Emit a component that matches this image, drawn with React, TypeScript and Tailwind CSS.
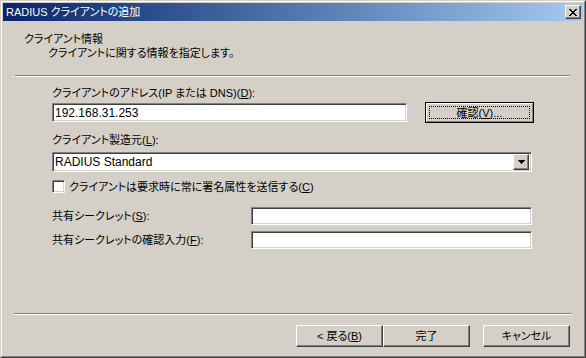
const sunken =
  "border border-t-[#808080] border-l-[#808080] border-b-white border-r-white shadow-[inset_1px_1px_0_#404040,inset_-1px_-1px_0_#d4d0c8] bg-white";
const raised =
  "border border-t-white border-l-white border-b-[#404040] border-r-[#404040] shadow-[inset_-1px_-1px_0_#808080,inset_1px_1px_0_#d4d0c8] bg-[#d4d0c8]";

function U({ children }: { children: string }) {
  return <span className="underline underline-offset-[1px]">{children}</span>;
}

function Button({ children, className = "" }: { children: React.ReactNode; className?: string }) {
  return (
    <div className={`${raised} w-[87px] h-[22px] flex items-center justify-center ${className}`}>
      {children}
    </div>
  );
}

export default function App() {
  return (
    <div className="w-[586px] h-[358px] bg-[#d4d0c8] border border-t-[#d4d0c8] border-l-[#d4d0c8] border-b-[#404040] border-r-[#404040] text-[11px] leading-[14px] text-black font-['Liberation_Sans','Noto_Sans_CJK_JP',sans-serif] [font-feature-settings:'palt']">
      <div className="h-full border border-t-white border-l-white border-b-[#808080] border-r-[#808080] p-px flex flex-col">
        {/* タイトルバー */}
        <div className="h-[18px] flex items-center bg-linear-to-r from-[#0a246a] to-[#a6caf0] pl-[3px] pr-[2px]">
          <span className="text-white">RADIUS クライアントの追加</span>
          <div className={`${raised} ml-auto w-[16px] h-[14px] flex items-center justify-center`}>
            <svg width="8" height="7" viewBox="0 0 8 7" shapeRendering="crispEdges">
              <path
                d="M0 0h2v1H0zM6 0h2v1H6zM1 1h2v1H1zM5 1h2v1H5zM2 2h4v1H2zM3 3h2v1H3zM2 4h4v1H2zM1 5h2v1H1zM5 5h2v1H5zM0 6h2v1H0zM6 6h2v1H6z"
                fill="#000"
              />
            </svg>
          </div>
        </div>

        {/* 本体 */}
        <div className="flex-1 flex flex-col pt-[11px]">
          <div className="pl-[21px]">クライアント情報</div>
          <div className="pl-[45px]">クライアントに関する情報を指定します。</div>
          <div className="mt-[15px] ml-[12px] mr-[13px] h-[2px] border-t border-t-[#808080] border-b border-b-white" />

          <div className="flex flex-col pl-[49px]">
            <div className="mt-[9px]">
              クライアントのアドレス(IP または DNS)(<U>D</U>):
            </div>
            <div className="mt-[2px] h-[21px] flex items-center">
              <div className={`${sunken} w-[355px] h-[19px] flex items-center pl-[2px] text-[12px]`}>192.168.31.253</div>
              <div className="ml-[18px] w-[109px] h-[21px] border border-black">
                <div className="h-full border border-t-white border-l-white border-b-[#808080] border-r-[#808080] flex p-[2px]">
                  <div className="flex-1 border border-dotted border-black flex items-center justify-center">
                    確認(<U>V</U>)...
                  </div>
                </div>
              </div>
            </div>

            <div className="mt-[10px]">
              クライアント製造元(<U>L</U>):
            </div>
            <div className={`${sunken} mt-[5px] w-[480px] h-[20px] flex items-center pl-[2px] pr-[2px]`}>
              <span className="text-[12px]">RADIUS Standard</span>
              <div className={`${raised} ml-auto w-[16px] h-[16px] flex items-center justify-center`}>
                <svg width="7" height="4" viewBox="0 0 7 4" shapeRendering="crispEdges">
                  <path d="M0 0h7v1H0zM1 1h5v1H1zM2 2h3v1H2zM3 3h1v1H3z" fill="#000" />
                </svg>
              </div>
            </div>

            <div className="mt-[8px] h-[13px] flex items-center gap-[4px]">
              <div className={`${sunken} w-[13px] h-[13px]`} />
              <span>
                クライアントは要求時に常に署名属性を送信する(<U>C</U>)
              </span>
            </div>

            <div className="mt-[14px] h-[18px] flex items-center">
              <span className="w-[199px]">
                共有シークレット(<U>S</U>):
              </span>
              <div className={`${sunken} w-[281px] h-[18px]`} />
            </div>
            <div className="mt-[6px] h-[18px] flex items-center">
              <span className="w-[199px]">
                共有シークレットの確認入力(<U>F</U>):
              </span>
              <div className={`${sunken} w-[281px] h-[18px]`} />
            </div>
          </div>

          {/* フッター */}
          <div className="mt-auto ml-[11px] mr-[12px] h-[2px] border-t border-t-[#808080] border-b border-b-white" />
          <div className="mt-[10px] mb-[8px] mr-[13px] flex justify-end">
            <Button>
              &lt; 戻る(<U>B</U>)
            </Button>
            <Button>完了</Button>
            <Button className="ml-[13px]">キャンセル</Button>
          </div>
        </div>
      </div>
    </div>
  );
}
